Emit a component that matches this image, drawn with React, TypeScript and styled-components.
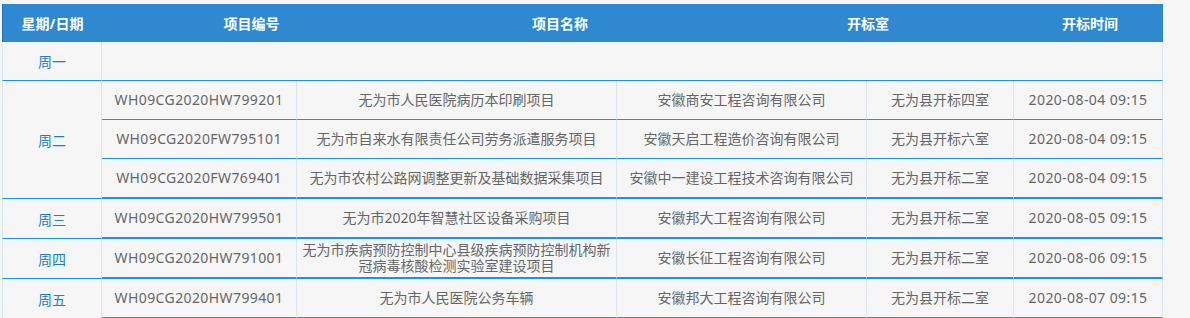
import React from 'react';
import styled, { createGlobalStyle } from 'styled-components';

type Item = {
  code: string;
  name: string;
  agency: string;
  room: string;
  time: string;
};

type Day = {
  label: string;
  items: Item[];
};

const days: Day[] = [
  { label: '周一', items: [] },
  {
    label: '周二',
    items: [
      {
        code: 'WH09CG2020HW799201',
        name: '无为市人民医院病历本印刷项目',
        agency: '安徽商安工程咨询有限公司',
        room: '无为县开标四室',
        time: '2020-08-04 09:15',
      },
      {
        code: 'WH09CG2020FW795101',
        name: '无为市自来水有限责任公司劳务派遣服务项目',
        agency: '安徽天启工程造价咨询有限公司',
        room: '无为县开标六室',
        time: '2020-08-04 09:15',
      },
      {
        code: 'WH09CG2020FW769401',
        name: '无为市农村公路网调整更新及基础数据采集项目',
        agency: '安徽中一建设工程技术咨询有限公司',
        room: '无为县开标二室',
        time: '2020-08-04 09:15',
      },
    ],
  },
  {
    label: '周三',
    items: [
      {
        code: 'WH09CG2020HW799501',
        name: '无为市2020年智慧社区设备采购项目',
        agency: '安徽邦大工程咨询有限公司',
        room: '无为县开标二室',
        time: '2020-08-05 09:15',
      },
    ],
  },
  {
    label: '周四',
    items: [
      {
        code: 'WH09CG2020HW791001',
        name: '无为市疾病预防控制中心县级疾病预防控制机构新冠病毒核酸检测实验室建设项目',
        agency: '安徽长征工程咨询有限公司',
        room: '无为县开标二室',
        time: '2020-08-06 09:15',
      },
    ],
  },
  {
    label: '周五',
    items: [
      {
        code: 'WH09CG2020HW799401',
        name: '无为市人民医院公务车辆',
        agency: '安徽邦大工程咨询有限公司',
        room: '无为县开标二室',
        time: '2020-08-07 09:15',
      },
    ],
  },
];

const widths = [100, 195, 320, 250, 147, 149];
const heads = ['星期/日期', '项目编号', '项目名称', '开标室', '开标时间'];

const GlobalStyle = createGlobalStyle`
  html, body {
    margin: 0;
    padding: 0;
    background: #f6f6f6;
  }
  body {
    font-family: "Noto Sans", "Noto Sans CJK SC", sans-serif;
  }
`;

const Page = styled.div`
  padding: 4px 0 0 2px;
  width: 1161px;
`;

// header has its own column widths, not aligned with the body
const HeaderBar = styled.div`
  display: grid;
  grid-template-columns: 99px 299px 318px 298px 146px;
  height: 38px;
  background: #2e89d1;
  border-left: 1px solid #1f74c0;
`;

const HeadCell = styled.div`
  display: flex;
  align-items: center;
  justify-content: center;
  color: #fff;
  font-size: 14px;
  font-weight: 700;
`;

const Table = styled.table`
  width: 1161px;
  table-layout: fixed;
  border-collapse: separate;
  border-spacing: 0;
  background: #f6f6f6;
`;

const DayCell = styled.td`
  height: 38px;
  padding: 0;
  text-align: center;
  vertical-align: middle;
  color: #1b7fcb;
  font-size: 14px;
  border-left: 1px solid #dde6ef;
  border-right: 1px solid #dde6ef;
  border-bottom: 1px solid #1890ff;
`;

const Cell = styled.td<{ $last?: boolean; $latin?: boolean }>`
  height: 38px;
  padding: 0 5px;
  text-align: center;
  vertical-align: middle;
  color: #666;
  font-size: 14px;
  line-height: 16px;
  letter-spacing: ${(p) => (p.$latin ? '0.4px' : '0')};
  border-right: 1px solid #dde6ef;
  border-bottom: ${(p) => (p.$last ? '2px' : '1px')} solid #1890ff;
`;

const EmptyCell = styled.td`
  height: 38px;
  padding: 0;
  border-right: 1px solid #dde6ef;
  border-bottom: 1px solid #1890ff;
`;

const App = () => {
  return (
    <Page>
      <GlobalStyle />
      <HeaderBar>
        {heads.map((h) => (
          <HeadCell key={h}>{h}</HeadCell>
        ))}
      </HeaderBar>
      <Table>
        <colgroup>
          {widths.map((w, i) => (
            <col key={i} style={{ width: w }} />
          ))}
        </colgroup>
        <tbody>
          {days.map((day) =>
            day.items.length === 0 ? (
              <tr key={day.label}>
                <DayCell>{day.label}</DayCell>
                <EmptyCell colSpan={5} />
              </tr>
            ) : (
              day.items.map((it, i) => {
                const last = i === day.items.length - 1;
                return (
                  <tr key={day.label + it.code}>
                    {i === 0 && <DayCell rowSpan={day.items.length}>{day.label}</DayCell>}
                    <Cell $last={last} $latin>
                      {it.code}
                    </Cell>
                    <Cell $last={last}>{it.name}</Cell>
                    <Cell $last={last}>{it.agency}</Cell>
                    <Cell $last={last}>{it.room}</Cell>
                    <Cell $last={last} $latin>
                      {it.time}
                    </Cell>
                  </tr>
                );
              })
            )
          )}
        </tbody>
      </Table>
    </Page>
  );
};

export default App;
